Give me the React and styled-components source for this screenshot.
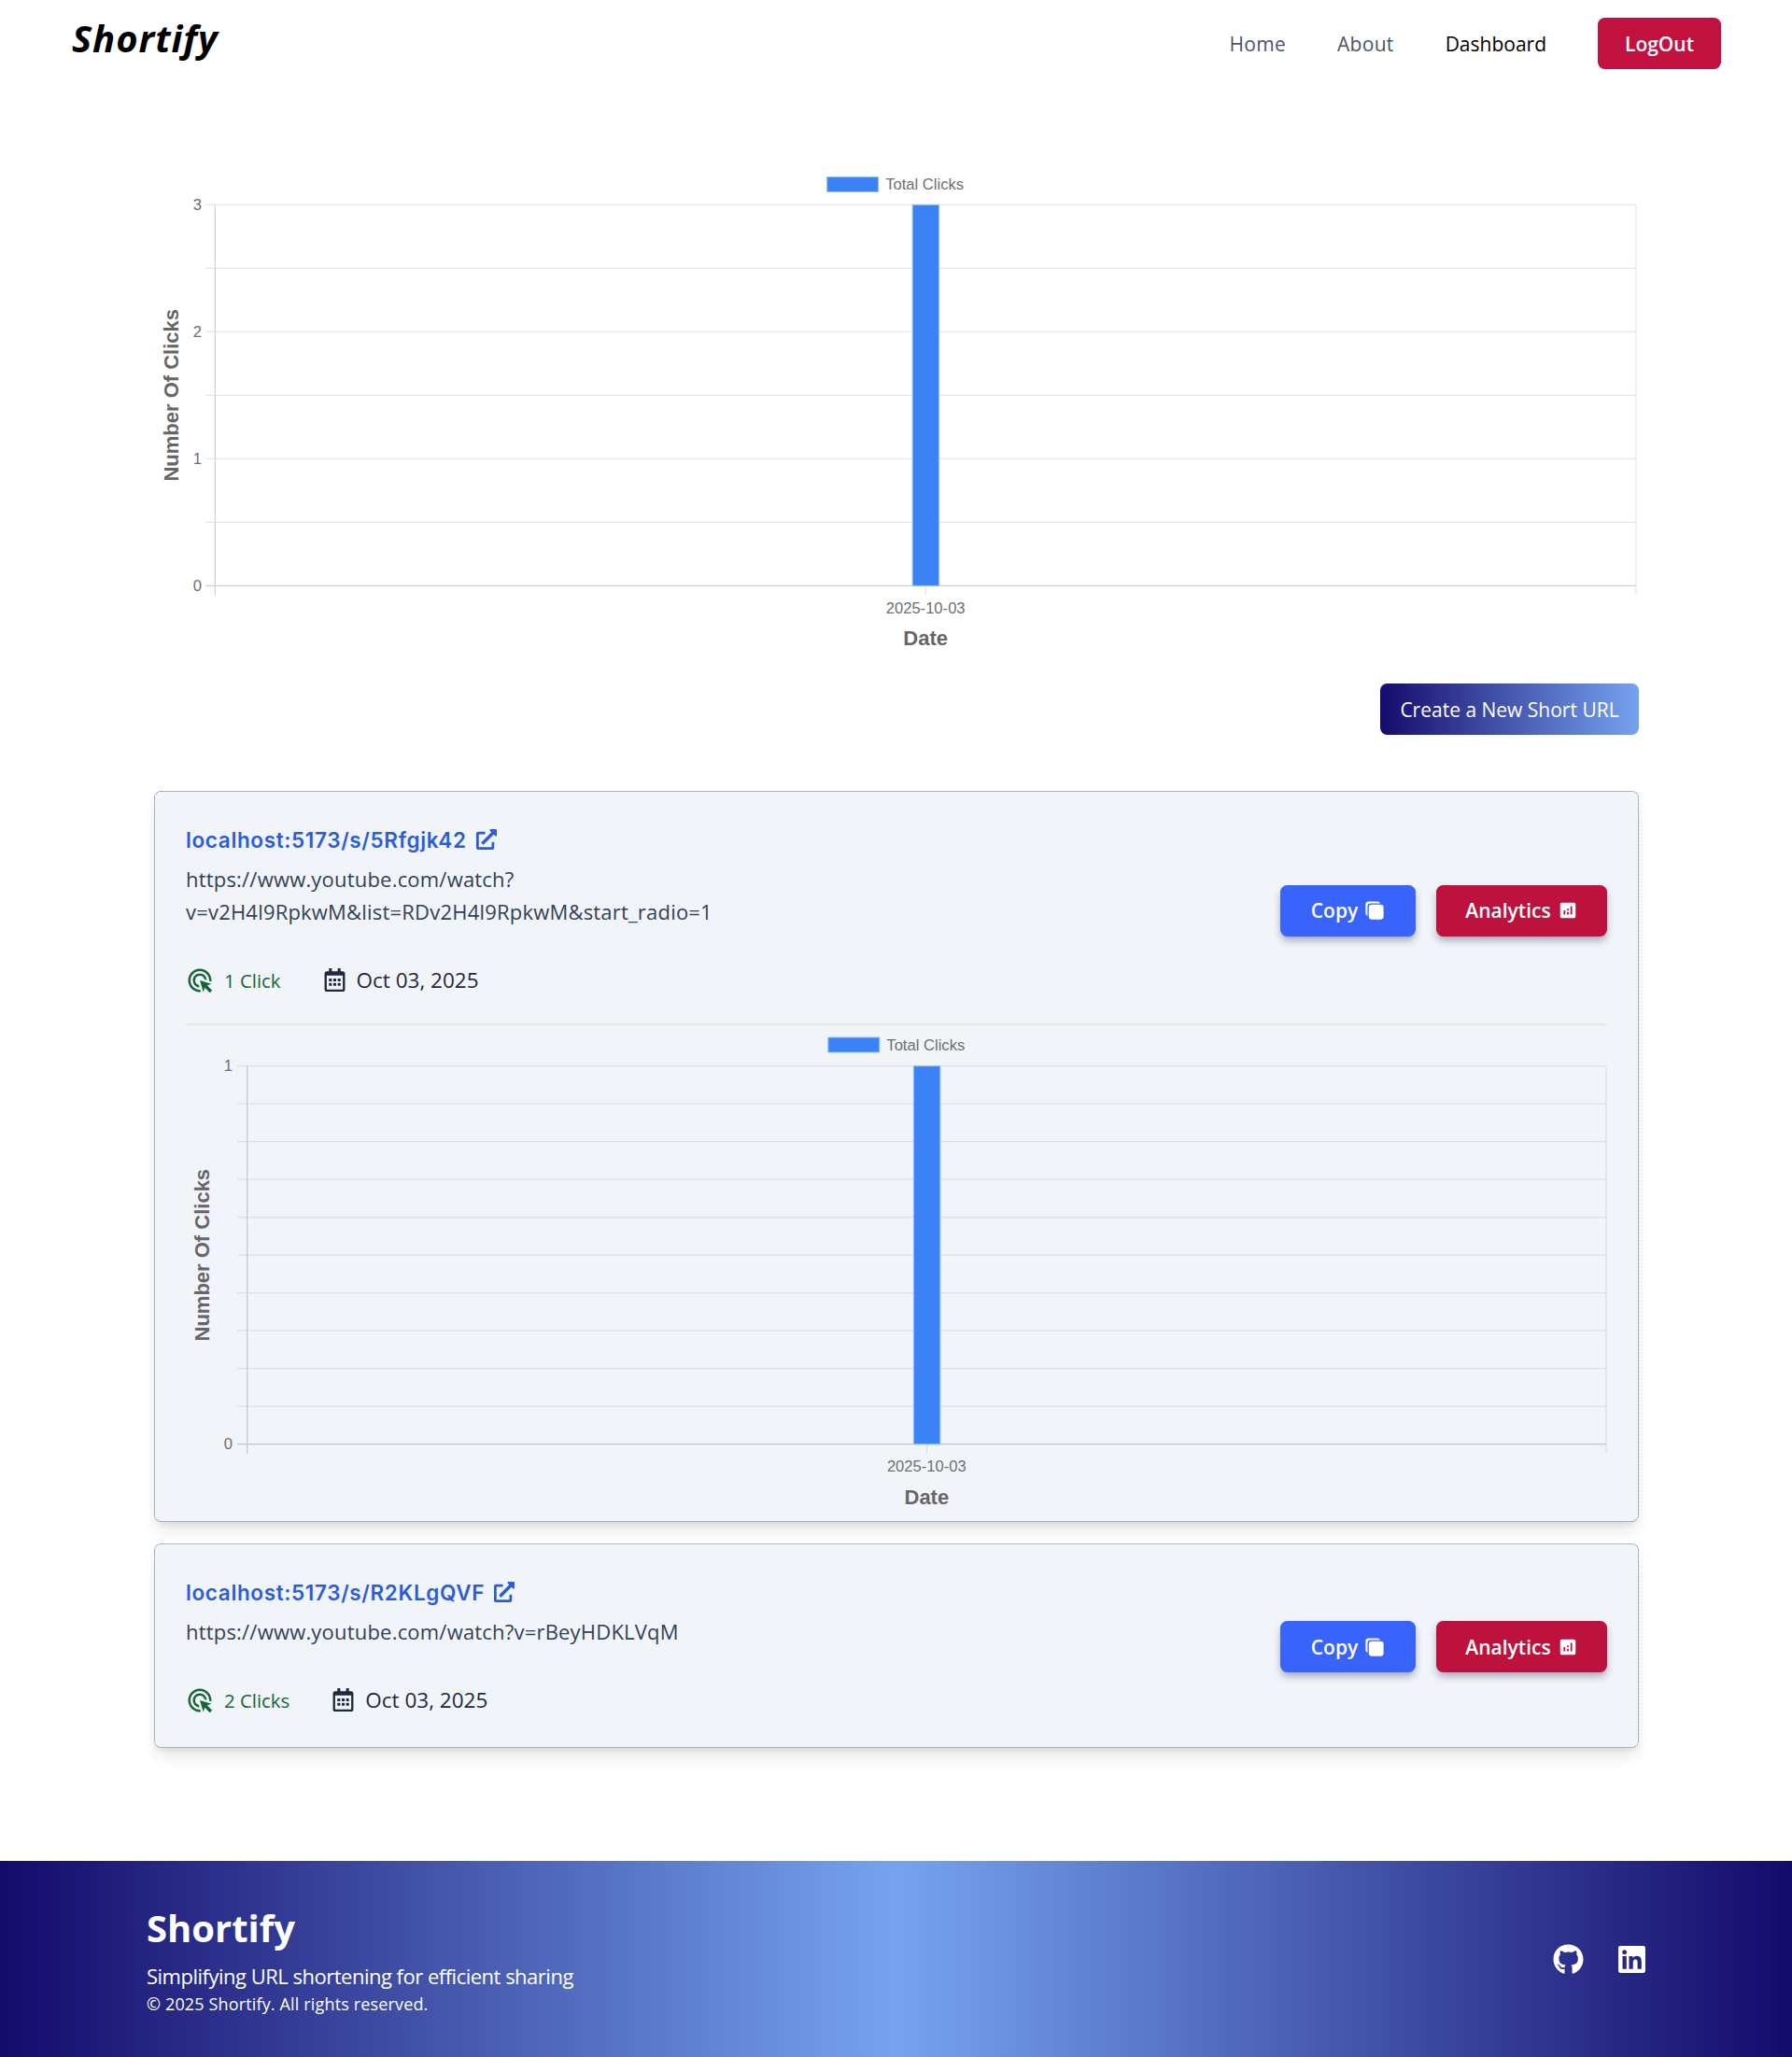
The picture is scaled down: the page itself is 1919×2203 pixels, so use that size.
import styled, { createGlobalStyle } from "styled-components";
import { FaExternalLinkAlt, FaGithub, FaLinkedin, FaRegCalendarAlt } from "react-icons/fa";
import { IoCopy } from "react-icons/io5";
import { MdAnalytics, MdOutlineAdsClick } from "react-icons/md";

const GlobalStyle = createGlobalStyle`
  html, body {
    margin: 0;
    padding: 0;
    background: #fff;
    font-family: "Open Sans", "Noto Sans", sans-serif;
  }
  * {
    box-sizing: border-box;
  }
`;

const Navbar = styled.header`
  height: 88px;
  padding: 0 76px 0 77px;
  display: flex;
  justify-content: space-between;
  align-items: flex-start;
`;

const Logo = styled.div`
  margin-top: 16px;
  font-size: 40px;
  line-height: 50px;
  font-weight: 700;
  font-style: italic;
  letter-spacing: 0.9px;
  color: #000;
`;

const NavList = styled.nav`
  margin-top: 19px;
  display: flex;
  align-items: center;
  gap: 55px;
`;

const NavItem = styled.a`
  font-size: 21px;
  font-weight: 500;
  letter-spacing: ${(p) => (p.$active ? "0" : "0.3px")};
  color: ${(p) => (p.$active ? "#000" : "#4b5563")};
`;

const LogoutButton = styled.button`
  width: 132px;
  height: 55px;
  border: 0;
  border-radius: 7.5px;
  background: #c1123f;
  color: #fff;
  font: 600 21px "Open Sans", sans-serif;
`;

const Main = styled.main`
  width: 1590px;
  margin: 92px auto 121px 165px;
`;

const ChartBox = styled.svg`
  display: block;
  font-family: "Liberation Sans", Arial, sans-serif;
`;

const CreateRow = styled.div`
  margin-top: 32px;
  display: flex;
  justify-content: flex-end;
`;

const CreateButton = styled.button`
  width: 277px;
  height: 55px;
  border: 0;
  border-radius: 7.5px;
  background: linear-gradient(to right, #160c6d, #76a3ef);
  color: #fff;
  font: 400 21px "Open Sans", sans-serif;
`;

const CardList = styled.section`
  margin-top: 60px;
  display: flex;
  flex-direction: column;
  gap: 23px;
`;

const Card = styled.article`
  padding: 31px 33px ${(p) => (p.$open ? "15px" : "33px")};
  background: #f1f5f9;
  border: 1px dotted #64748b;
  border-bottom: 1px solid #a3b1c6;
  border-radius: 7.5px;
  box-shadow: 0 12px 18px -4px rgba(15, 23, 42, 0.12), 0 4px 7px -3px rgba(15, 23, 42, 0.1);
`;

const CardTop = styled.div`
  display: flex;
  justify-content: space-between;
  align-items: center;
`;

const ShortLink = styled.a`
  display: flex;
  align-items: center;
  gap: 10px;
  height: 40px;
  font: 600 22.5px Inter, sans-serif;
  letter-spacing: 0.64px;
  color: #2b5cdb;

  svg {
    width: 22px;
    height: 22px;
  }
`;

const LongUrl = styled.p`
  margin: 5px 0 0;
  max-width: 640px;
  font-size: 22px;
  line-height: 35px;
  letter-spacing: 0.2px;
  color: #334155;
`;

const Stats = styled.div`
  margin-top: 38px;
  height: 35px;
  display: flex;
  align-items: center;
  gap: 45px;
`;

const Stat = styled.div`
  display: flex;
  align-items: center;
  gap: ${(p) => (p.$date ? "11px" : "11px")};
  font-size: ${(p) => (p.$date ? "22.5px" : "20.4px")};
  font-weight: 500;
  color: ${(p) => (p.$date ? "#1e293b" : "#166534")};
`;

const Actions = styled.div`
  margin-top: 4px;
  display: flex;
  gap: 22px;
`;

const ActionButton = styled.button`
  width: ${(p) => p.$w}px;
  height: 55px;
  border: 0;
  border-radius: 7.5px;
  display: flex;
  align-items: center;
  justify-content: center;
  gap: 7px;
  background: ${(p) => p.$bg};
  color: #fff;
  font: 600 21px "Open Sans", sans-serif;
  box-shadow: 0 5px 8px -1px rgba(30, 41, 80, 0.4);
`;

const CardChart = styled.div`
  margin-top: 29px;
  border-top: 2px solid #e5e7eb;
`;

const Footer = styled.footer`
  height: 210px;
  padding: 0 155px 0 157px;
  display: flex;
  justify-content: space-between;
  align-items: center;
  background: linear-gradient(to right, #140a6b, #76a3ef, #140a6b);
  color: #fff;
`;

const FooterBrand = styled.div`
  margin-top: 3px;
`;

const FooterTitle = styled.h2`
  margin: 0;
  font-size: 40px;
  line-height: 50px;
  font-weight: 700;
`;

const FooterText = styled.p`
  margin: 11px 0 0;
  font-size: 22px;
  line-height: 30px;
  letter-spacing: -0.5px;
`;

const FooterNote = styled.p`
  margin: 2px 0 0;
  font-size: 18px;
  line-height: 26px;
  letter-spacing: 0.15px;
`;

const Socials = styled.div`
  display: flex;
  align-items: center;
  gap: 35px;
  font-size: 33px;
  line-height: 0;
`;

const Chart = ({ w, h, left, right, top, bottom, steps, labels, tickRight, titleX, legendY, dateY, titleY, grid, axis }) => {
  const center = (left + right) / 2;
  const midY = (top + bottom) / 2;
  const lines = Array.from({ length: steps + 1 }, (_, i) => top + ((bottom - top) * i) / steps);
  const labelEvery = steps / (labels.length - 1);

  return (
    <ChartBox width={w} height={h} viewBox={`0 0 ${w} ${h}`}>
      <rect x={center - 105.5} y={legendY - 8} width={55} height={16} fill="#3b82f6" stroke="#93c5fd" strokeWidth="1" />
      <text x={center - 43} y={legendY + 5.5} fontSize="16.6" fill="#6f6f6f">Total Clicks</text>

      {lines.map((y, i) => (
        <line key={y} x1={left - 10.5} x2={right} y1={y} y2={y} stroke={i === steps ? axis : grid} strokeWidth="1.25" />
      ))}
      <line x1={right} x2={right} y1={top} y2={bottom + 10} stroke={grid} strokeWidth="1.25" />
      <line x1={left} x2={left} y1={top} y2={bottom + 10} stroke={axis} strokeWidth="1.25" />
      <line x1={center} x2={center} y1={bottom} y2={bottom + 10} stroke={grid} strokeWidth="1.25" />

      {labels.map((label, i) => (
        <text key={label} x={tickRight} y={top + ((bottom - top) * i * labelEvery) / steps + 5.5} textAnchor="end" fontSize="16.6" fill="#6f6f6f">
          {label}
        </text>
      ))}

      <rect x={center - 14} y={top} width={28.5} height={bottom - top} fill="#3b82f6" stroke="#93c5fd" strokeWidth="1" />

      <text x={center} y={dateY} textAnchor="middle" fontSize="16.6" fill="#6f6f6f">2025-10-03</text>
      <text x={center} y={titleY} textAnchor="middle" fontSize="22" fontWeight="700" fill="#666">Date</text>
      <text
        transform={`translate(${titleX} ${midY}) rotate(-90)`}
        textAnchor="middle"
        fontSize="22"
        fontWeight="700"
        fill="#666"
      >
        Number Of Clicks
      </text>
    </ChartBox>
  );
};

const LinkCard = ({ short, url, clicks, children }) => (
  <Card $open={!!children}>
    <CardTop>
      <div>
        <ShortLink>
          {short}
          <FaExternalLinkAlt />
        </ShortLink>
        <LongUrl>{url}</LongUrl>
        <Stats>
          <Stat>
            <MdOutlineAdsClick size={30} />
            {clicks}
          </Stat>
          <Stat $date>
            <FaRegCalendarAlt size={25} />
            Oct 03, 2025
          </Stat>
        </Stats>
      </div>
      <Actions>
        <ActionButton $w={145} $bg="#3864fb">
          Copy <IoCopy size={22} />
        </ActionButton>
        <ActionButton $w={183} $bg="#bd123d">
          Analytics <MdAnalytics size={22} />
        </ActionButton>
      </Actions>
    </CardTop>
    {children}
  </Card>
);

export default function App() {
  return (
    <>
      <GlobalStyle />
      <Navbar>
        <Logo>Shortify</Logo>
        <NavList>
          <NavItem>Home</NavItem>
          <NavItem>About</NavItem>
          <NavItem $active>Dashboard</NavItem>
          <LogoutButton>LogOut</LogoutButton>
        </NavList>
      </Navbar>

      <Main>
        <Chart
          w={1590}
          h={520}
          left={65.3}
          right={1587}
          top={39.3}
          bottom={447.3}
          steps={6}
          labels={["3", "2", "1", "0"]}
          tickRight={51}
          titleX={25.5}
          legendY={17.5}
          dateY={477}
          titleY={511}
          grid="#e6e6e6"
          axis="#d0d0d0"
        />

        <CreateRow>
          <CreateButton>Create a New Short URL</CreateButton>
        </CreateRow>

        <CardList>
          <LinkCard
            short="localhost:5173/s/5Rfgjk42"
            url="https://www.youtube.com/watch?v=v2H4l9RpkwM&list=RDv2H4l9RpkwM&start_radio=1"
            clicks="1 Click"
          >
            <CardChart>
              <Chart
                w={1522}
                h={516}
                left={65.7}
                right={1521}
                top={43.7}
                bottom={448.7}
                steps={10}
                labels={["1", "0"]}
                tickRight={50}
                titleX={24.5}
                legendY={21}
                dateY={478}
                titleY={512.5}
                grid="#dcdfe4"
                axis="#c4c7cc"
              />
            </CardChart>
          </LinkCard>
          <LinkCard
            short="localhost:5173/s/R2KLgQVF"
            url="https://www.youtube.com/watch?v=rBeyHDKLVqM"
            clicks="2 Clicks"
          />
        </CardList>
      </Main>

      <Footer>
        <FooterBrand>
          <FooterTitle>Shortify</FooterTitle>
          <FooterText>Simplifying URL shortening for efficient sharing</FooterText>
          <FooterNote>© 2025 Shortify. All rights reserved.</FooterNote>
        </FooterBrand>
        <Socials>
          <FaGithub />
          <FaLinkedin />
        </Socials>
      </Footer>
    </>
  );
}
